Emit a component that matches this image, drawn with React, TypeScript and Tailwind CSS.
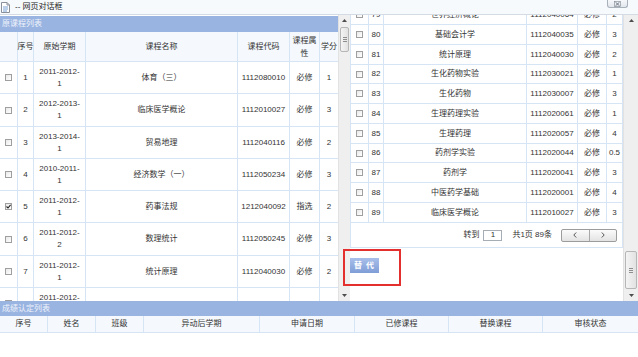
import React from 'react';

// 原课程列表（左）
const leftRows = [
  { no: 1, term: ['2011-2012-', '1'], name: '体育（三）', code: '1112080010', attr: '必修', credit: '1', h: 'h-[32px]' },
  { no: 2, term: ['2012-2013-', '1'], name: '临床医学概论', code: '1112010027', attr: '必修', credit: '3', h: 'h-[33px]' },
  { no: 3, term: ['2013-2014-', '1'], name: '贸易地理', code: '1112040116', attr: '必修', credit: '2', h: 'h-[32px]' },
  { no: 4, term: ['2010-2011-', '1'], name: '经济数学（一）', code: '1112050234', attr: '必修', credit: '3', h: 'h-[32px]' },
  { no: 5, term: ['2011-2012-', '1'], name: '药事法规', code: '1212040092', attr: '指选', credit: '2', h: 'h-[32px]', checked: true },
  { no: 6, term: ['2011-2012-', '2'], name: '数理统计', code: '1112050245', attr: '必修', credit: '3', h: 'h-[33px]' },
  { no: 7, term: ['2011-2012-', '1'], name: '统计原理', code: '1112040030', attr: '必修', credit: '2', h: 'h-[32px]' },
  { no: 8, term: ['2011-2012-', '1'], name: '', code: '', attr: '', credit: '', h: 'h-[32px]' },
];

// 可替代课程（右）
const rightRows = [
  { no: 79, name: '世界经济概论', code: '1112040064', credit: '2', h: 'h-[20px]' },
  { no: 80, name: '基础会计学', code: '1112040035', credit: '3', h: 'h-[20px]' },
  { no: 81, name: '统计原理', code: '1112040030', credit: '2', h: 'h-[20px]' },
  { no: 82, name: '生化药物实验', code: '1112030021', credit: '1', h: 'h-[19px]' },
  { no: 83, name: '生化药物', code: '1112030007', credit: '3', h: 'h-[20px]' },
  { no: 84, name: '生理药理实验', code: '1112020061', credit: '1', h: 'h-[20px]' },
  { no: 85, name: '生理药理', code: '1112020057', credit: '4', h: 'h-[20px]' },
  { no: 86, name: '药剂学实验', code: '1112020044', credit: '0.5', h: 'h-[19px]' },
  { no: 87, name: '药剂学', code: '1112020041', credit: '3', h: 'h-[20px]' },
  { no: 88, name: '中医药学基础', code: '1112020001', credit: '4', h: 'h-[20px]' },
  { no: 89, name: '临床医学概论', code: '1112010027', credit: '3', h: 'h-[20px]' },
];

const bottomCols = [
  { label: '序号', w: 'w-[48px]' },
  { label: '姓名', w: 'w-[48px]' },
  { label: '班级', w: 'w-[48px]' },
  { label: '异动后学期', w: 'w-[116px]' },
  { label: '申请日期', w: 'w-[95px]' },
  { label: '已修课程', w: 'w-[94px]' },
  { label: '替换课程', w: 'w-[94px]' },
  { label: '审核状态', w: 'w-[95px]' },
];

const cell = 'flex items-center justify-center text-center border-r border-[#d6e5f5] shrink-0';

const CheckBox = ({ checked = false }: { checked?: boolean }) => (
  <span className="w-[7px] h-[7px] border border-[#9f9f9f] bg-linear-to-br from-[#e9e9e9] to-white flex items-center justify-center">
    {checked && (
      <svg width="5" height="5" viewBox="0 0 5 5">
        <path d="M0.5 2.5 L2 4 L4.6 0.8" stroke="#222" strokeWidth="1.1" fill="none" />
      </svg>
    )}
  </span>
);

const Arrow = ({ up }: { up?: boolean }) => (
  <div className="h-[11px] flex items-center justify-center shrink-0">
    <svg width="5" height="3" viewBox="0 0 5 3">
      <path d={up ? 'M0 3 L2.5 0 L5 3 Z' : 'M0 0 L2.5 3 L5 0 Z'} fill="#4d4d4d" />
    </svg>
  </div>
);

const Thumb = ({ h }: { h: string }) => (
  <div className={`${h} mx-[1px] shrink-0 rounded-[2px] border border-[#b6b6b6] bg-linear-to-r from-[#f4f4f4] to-[#e2e2e2] flex flex-col items-center justify-center gap-[1px]`}>
    <span className="w-[4px] h-px bg-[#8e8e8e]" />
    <span className="w-[4px] h-px bg-[#8e8e8e]" />
    <span className="w-[4px] h-px bg-[#8e8e8e]" />
  </div>
);

const LeftPanel = () => (
  <div className="w-[338px] shrink-0 overflow-hidden flex flex-col">
    <div className="mt-[1px] h-[16px] shrink-0 bg-[#9ab4e1] text-[#eef3fb] pl-[2px] flex items-center">原课程列表</div>
    <div className="flex h-[30px] shrink-0 bg-[#f5f9fd] border-b border-[#d6e5f5] leading-[13px]">
      <div className={`${cell} w-[18px]`} />
      <div className={`${cell} w-[16px] whitespace-nowrap`}>序号</div>
      <div className={`${cell} w-[52px]`}>原始学期</div>
      <div className={`${cell} w-[152px]`}>课程名称</div>
      <div className={`${cell} w-[52px]`}>课程代码</div>
      <div className={`${cell} w-[30px]`}>课程属性</div>
      <div className="w-[18px] shrink-0 flex items-center justify-center whitespace-nowrap">学分</div>
    </div>
    {leftRows.map((r) => (
      <div key={r.no} className={`flex ${r.h} shrink-0 border-b border-[#d6e5f5] leading-[12px]`}>
        <div className={`${cell} w-[18px]`}>
          <CheckBox checked={r.checked} />
        </div>
        <div className={`${cell} w-[16px]`}>{r.name ? r.no : ''}</div>
        <div className={`${cell} w-[52px] flex-col`}>
          <span>{r.term[0]}</span>
          <span>{r.term[1]}</span>
        </div>
        <div className={`${cell} w-[152px]`}>{r.name}</div>
        <div className={`${cell} w-[52px]`}>{r.code}</div>
        <div className={`${cell} w-[30px]`}>{r.attr}</div>
        <div className="w-[18px] shrink-0 flex items-center justify-center">{r.credit}</div>
      </div>
    ))}
  </div>
);

const RightPanel = () => (
  <div className="w-[273px] shrink-0 overflow-hidden flex flex-col">
    <div className="-mt-[10px] border-l border-b border-[#d6e5f5]">
      {rightRows.map((r) => (
        <div key={r.no} className={`flex ${r.h} border-b border-[#d6e5f5]`}>
          <div className={`${cell} w-[18px]`}>
            <CheckBox />
          </div>
          <div className={`${cell} w-[15px]`}>{r.no}</div>
          <div className={`${cell} w-[143px]`}>{r.name}</div>
          <div className={`${cell} w-[51px]`}>{r.code}</div>
          <div className={`${cell} w-[29px]`}>必修</div>
          <div className={`${cell} w-[16px]`}>{r.credit}</div>
        </div>
      ))}
      <div className="h-[24px] flex items-center justify-end pr-[5px] border-r border-[#d6e5f5]">
        <span>转到</span>
        <span className="ml-[4px] w-[19px] h-[11px] border border-[#a7adb5] flex items-center justify-center bg-white">1</span>
        <span className="ml-[10px]">共1页 89条</span>
        <div className="ml-[9px] w-[56px] h-[13px] border border-[#9c9c9c] rounded-[2px] bg-linear-to-b from-[#fbfbfb] to-[#e3e3e3] flex">
          <div className="flex-1 border-r border-[#a8a8a8] flex items-center justify-center">
            <svg width="4" height="6" viewBox="0 0 4 6">
              <path d="M3.2 0.5 L0.8 3 L3.2 5.5" stroke="#444" strokeWidth="0.9" fill="none" />
            </svg>
          </div>
          <div className="flex-1 flex items-center justify-center">
            <svg width="4" height="6" viewBox="0 0 4 6">
              <path d="M0.8 0.5 L3.2 3 L0.8 5.5" stroke="#444" strokeWidth="0.9" fill="none" />
            </svg>
          </div>
        </div>
      </div>
    </div>
    <button className="mt-[10px] w-[29px] h-[15px] bg-linear-to-b from-[#a9bfea] to-[#7f9dd7] text-white font-bold tracking-[1px] flex items-center justify-center">
      替 代
    </button>
  </div>
);

export default function App() {
  return (
    <div className="w-[638px] h-[357px] overflow-hidden bg-white text-[8px] text-[#333] font-['Liberation_Sans','Noto_Sans_CJK_SC',sans-serif] flex flex-col">
      {/* 标题栏 */}
      <div className="relative h-[15px] shrink-0 bg-[#f7fafd] border-b border-[#d5dbe3] flex items-center pl-[1px]">
        <svg width="9" height="11" viewBox="0 0 9 11">
          <path d="M0.5 0.5 H6 L8.5 3 V10.5 H0.5 Z" fill="#fff" stroke="#8a9099" />
          <path d="M6 0.5 V3 H8.5" fill="none" stroke="#8a9099" />
          <path d="M2 5 H7 M2 7 H7 M2 9 H6" stroke="#7ba0d3" />
        </svg>
        <span className="ml-[5px] text-[#222]">-- 网页对话框</span>
        <div className="absolute right-[10px] top-0 w-[21px] h-[8px] border border-t-0 border-[#a8b0ba] rounded-b-[3px] bg-linear-to-b from-[#f6f8fb] to-[#e2e7ed] flex items-center justify-center">
          <svg width="7" height="6" viewBox="0 0 7 6">
            <rect x="0.5" y="0.5" width="6" height="5" fill="none" stroke="#7d8590" strokeWidth="0.6" />
            <path d="M1.5 1.2 L5.5 4.8 M5.5 1.2 L1.5 4.8" stroke="#59616b" strokeWidth="0.8" />
          </svg>
        </div>
      </div>

      {/* 上半部分：两个滚动区 */}
      <div className="relative flex h-[286px] shrink-0">
        <LeftPanel />
        <div className="w-[12px] shrink-0 bg-[#efefef] border-l border-[#e2e2e2] flex flex-col">
          <Arrow up />
          <div className="h-px shrink-0" />
          <Thumb h="h-[25px]" />
          <div className="flex-1" />
          <Arrow />
        </div>
        <RightPanel />
        <div className="w-[15px] shrink-0 bg-[#efefef] border-l border-[#e2e2e2] flex flex-col">
          <Arrow up />
          <div className="flex-1" />
          <Thumb h="h-[38px]" />
          <div className="h-px shrink-0" />
          <Arrow />
        </div>
        {/* 红色标注框 */}
        <div className="absolute left-[343px] top-[234px] w-[58px] h-[37px] border-2 border-[#e3302e]" />
      </div>

      {/* 成绩认定列表 */}
      <div className="h-[15px] shrink-0 bg-[#9ab4e1] text-[#eef3fb] pl-[2px] flex items-center">成绩认定列表</div>
      <div className="flex h-[17px] shrink-0 bg-[#f5f9fd] border-b border-[#d6e5f5]">
        {bottomCols.map((c, i) => (
          <div
            key={c.label}
            className={`${c.w} shrink-0 flex items-center justify-center ${i < bottomCols.length - 1 ? 'border-r border-[#d6e5f5]' : ''}`}
          >
            {c.label}
          </div>
        ))}
      </div>
      <div className="flex-1 bg-white" />
    </div>
  );
}
